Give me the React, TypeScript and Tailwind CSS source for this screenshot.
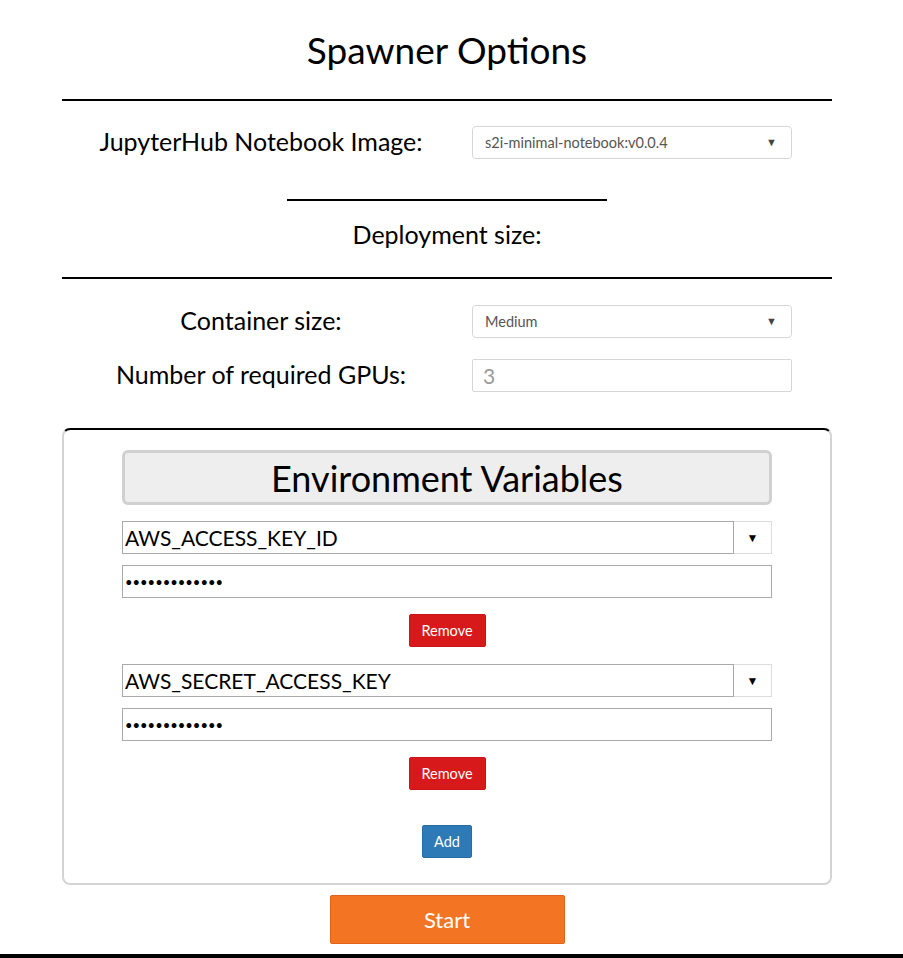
import React from "react";

function SelectBox({ value }: { value: string }) {
  return (
    <div className="flex h-[33px] w-[320px] items-center justify-between rounded-[4px] border border-[#d6d6d6] bg-white pl-[12px] pr-[14px] text-[14.5px] text-[#555]">
      <span>{value}</span>
      <span className="text-[11px] text-[#444]">▼</span>
    </div>
  );
}

function FormRow({ label, children }: { label: string; children: React.ReactNode }) {
  return (
    <div className="flex items-center">
      <div className="w-[398px] pb-[4px] text-center text-[25px] leading-[26px]">{label}</div>
      <div className="ml-[12px]">{children}</div>
    </div>
  );
}

function EnvVar({ name }: { name: string }) {
  return (
    <>
      <div className="flex h-[33px]">
        <div className="flex flex-1 items-center border border-[#a9a9a9] pl-[2px] text-[21px]">{name}</div>
        <div className="flex w-[38px] items-center justify-center border border-l-0 border-[#dcdcdc] text-[12px]">▼</div>
      </div>
      <input
        type="password"
        readOnly
        defaultValue="secretsecret1"
        className="mt-[11px] block h-[33px] w-full border border-[#a9a9a9] pl-[2px] text-[13px] outline-none"
      />
      <div className="mt-[16px] flex justify-center">
        <button className="h-[33px] w-[77px] rounded-[2px] border border-[#c9151a] bg-[#d7191c] text-[14.5px] text-white">
          Remove
        </button>
      </div>
    </>
  );
}

export default function App() {
  return (
    <div className="relative min-h-[958px] bg-white font-['Lato',sans-serif] text-black">
      <div className="ml-[62px] w-[770px]">
        <h1 className="pt-[30px] text-center text-[37px] leading-[40px]">Spawner Options</h1>
        <hr className="mt-[29px] border-0 border-t-2 border-black" />

        <div className="mt-[25px]">
          <FormRow label="JupyterHub Notebook Image:">
            <SelectBox value="s2i-minimal-notebook:v0.0.4" />
          </FormRow>
        </div>

        <hr className="mx-auto mt-[40px] w-[320px] border-0 border-t-2 border-black" />
        <p className="mt-[18px] text-center text-[25px] leading-[30px]">Deployment size:</p>
        <hr className="mt-[28px] border-0 border-t-2 border-black" />

        <div className="mt-[26px]">
          <FormRow label="Container size:">
            <SelectBox value="Medium" />
          </FormRow>
        </div>
        <div className="mt-[21px]">
          <FormRow label="Number of required GPUs:">
            <input
              placeholder="3"
              className="block h-[33px] w-[320px] rounded-[2px] border border-[#d6d6d6] pl-[10px] text-[21px] placeholder:text-[#9a9a9a] outline-none"
            />
          </FormRow>
        </div>

        <div className="mt-[36px] rounded-[8px] border-2 border-[#d4d4d4] border-t-black px-[58px] pb-[25px] pt-[20px]">
          <div className="flex h-[55px] items-center justify-center rounded-[6px] border-[3px] border-[#d0d0d0] bg-[#eeeeee] text-[36px]">
            Environment Variables
          </div>
          <div className="mt-[16px]">
            <EnvVar name="AWS_ACCESS_KEY_ID" />
          </div>
          <div className="mt-[17px]">
            <EnvVar name="AWS_SECRET_ACCESS_KEY" />
          </div>
          <div className="mt-[35px] flex justify-center">
            <button className="h-[33px] w-[50px] rounded-[2px] border border-[#286ea6] bg-[#2e7ab6] text-[14.5px] text-white">
              Add
            </button>
          </div>
        </div>

        <div className="mt-[10px] flex justify-center">
          <button className="h-[49px] w-[235px] rounded-[2px] border border-[#e0631a] bg-[#f37524] text-[22px] text-white">
            Start
          </button>
        </div>
      </div>
      <div className="mt-[10px] h-[4px] w-full bg-black" />
    </div>
  );
}
